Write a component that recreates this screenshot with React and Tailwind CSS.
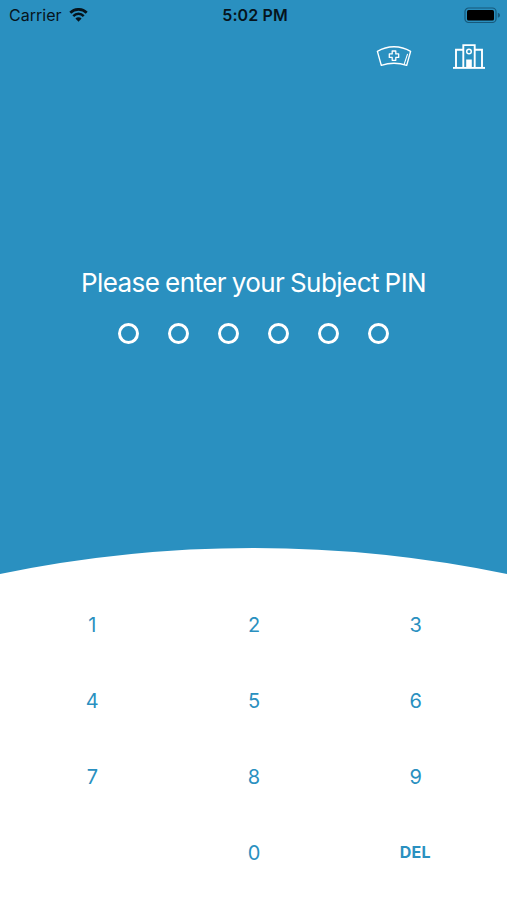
import React from 'react';

const KEYS = ['1', '2', '3', '4', '5', '6', '7', '8', '9', '', '0', 'DEL'];
const PIN_LENGTH = 6;

const WifiIcon = () => (
  <svg className="ml-[7px] h-[14px] w-[19px]" viewBox="0 0 20 15" fill="none" stroke="#06141c">
    <path d="M1.2 5.1a12.4 12.4 0 0 1 17.6 0" strokeWidth="2.9" />
    <path d="M4.4 8.6a7.9 7.9 0 0 1 11.2 0" strokeWidth="2.7" />
    <path d="M10 14.6 6.7 11.3a4.7 4.7 0 0 1 6.6 0z" fill="#06141c" stroke="none" />
  </svg>
);

const BatteryIcon = () => (
  <svg className="h-[17px] w-[37px]" viewBox="0 0 37 17" fill="none">
    <rect x="1" y="1" width="31" height="14.5" rx="3.6" stroke="#17597b" strokeWidth="1.2" />
    <rect x="3" y="3" width="27" height="10.5" rx="1.6" fill="#000" />
    <path d="M33.8 5.8c1.6.5 2.2 1.4 2.2 2.5s-.6 2-2.2 2.5z" fill="#17597b" />
  </svg>
);

const NurseCapIcon = () => (
  <svg className="h-6 w-9" viewBox="0 0 36 24" fill="none" stroke="#fff" strokeWidth="1.4" strokeLinejoin="round">
    <path d="M1.4 7.4C11.5 1.2 24.5 1.2 34.6 7.4L30.7 21.4C22.8 18.8 13.2 18.8 5.3 21.4z" />
    <path d="M31.6 9.8 28.2 20.2" strokeWidth="1.1" />
    <path d="M16.2 7h3.6v2.9h2.9v3.5h-2.9v2.9h-3.6v-2.9h-2.9V9.9h2.9z" strokeWidth="1.3" />
  </svg>
);

const HospitalIcon = () => (
  <svg className="h-[25px] w-8" viewBox="0 0 32 25" fill="none" stroke="#fff" strokeWidth="1.9">
    <path d="M10.3 23.6V1.1h11.4v22.5" />
    <path d="M10.3 5.7H3v18M21.7 5.7H29v18" />
    <path d="M0 23.9h32" />
    <circle cx="16" cy="7.5" r="2.3" strokeWidth="1.5" />
    <path d="M13.2 15.5h5.6V24h-5.6z" fill="#fff" stroke="none" />
  </svg>
);

const StatusBar = () => (
  <div className="grid h-[30px] grid-cols-3 items-center pl-[9px] pr-[6px] text-[#06141c]">
    <div className="flex items-center">
      <span className="text-[16px] tracking-[0.02px]">Carrier</span>
      <WifiIcon />
    </div>
    <span className="text-center text-[16px] font-semibold tracking-[0.1px]">5:02 PM</span>
    <div className="flex justify-end">
      <BatteryIcon />
    </div>
  </div>
);

const App = () => {
  return (
    <div className="flex h-[900px] w-[507px] flex-col overflow-hidden bg-[#2a90c0] font-['Inter',sans-serif]">
      <StatusBar />

      <div className="flex h-[52px] items-center justify-end gap-[41px] pr-[22px]">
        <button type="button" aria-label="Nurse">
          <NurseCapIcon />
        </button>
        <button type="button" aria-label="Site">
          <HospitalIcon />
        </button>
      </div>

      <div className="flex h-[466px] flex-col items-center pt-[183px] text-white">
        <h1 className="whitespace-nowrap text-[26px] leading-9 tracking-[-0.55px] [word-spacing:-1.1px]">
          Please enter your Subject PIN
        </h1>
        <div className="mt-[22px] flex gap-[29px]">
          {Array.from({ length: PIN_LENGTH }, (_, i) => (
            <span key={i} className="size-[21px] rounded-full border-3 border-white" />
          ))}
        </div>
      </div>

      <svg className="h-[26px] w-full shrink-0" viewBox="0 0 507 26" preserveAspectRatio="none">
        <path d="M0 26A1249 1249 0 0 1 507 26z" fill="#fff" />
      </svg>
      <div className="grow bg-white px-[11px] pt-[13px] text-[#2a90c0]">
        <div className="grid grid-cols-3">
          {KEYS.map((key, i) => (
            <button
              key={i}
              type="button"
              className={
                key === 'DEL'
                  ? 'h-[74px] text-[16px] font-bold tracking-[0.2px]'
                  : 'h-[76px] pl-px text-[20px]'
              }
            >
              {key}
            </button>
          ))}
        </div>
      </div>
    </div>
  );
};

export default App;
